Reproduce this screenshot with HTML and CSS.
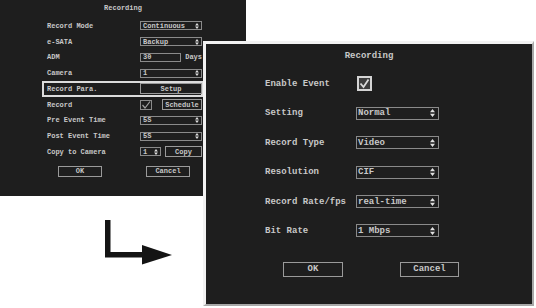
FILE: index.html
```html
<!DOCTYPE html>
<html lang="en">
<head>
    <meta charset="UTF-8">
    <title>Recording</title>
    <link rel="stylesheet" href="styles.css">
</head>
<body>
<div class="desk">

    <div class="win win-main">
        <div class="win-title">Recording</div>
        <div class="rows">
            <div class="row">
                <span class="lbl">Record Mode</span>
                <span class="sel">Continuous<svg class="updown" viewBox="0 0 5 8"><path d="M0 3.3 2.5 0 5 3.3Z M0 4.7 5 4.7 2.5 8Z"/></svg></span>
            </div>
            <div class="row">
                <span class="lbl">e-SATA</span>
                <span class="sel">Backup<svg class="updown" viewBox="0 0 5 8"><path d="M0 3.3 2.5 0 5 3.3Z M0 4.7 5 4.7 2.5 8Z"/></svg></span>
            </div>
            <div class="row">
                <span class="lbl">ADM</span>
                <span class="inp">30</span>
                <span class="unit">Days</span>
            </div>
            <div class="row">
                <span class="lbl">Camera</span>
                <span class="sel">1<svg class="updown" viewBox="0 0 5 8"><path d="M0 3.3 2.5 0 5 3.3Z M0 4.7 5 4.7 2.5 8Z"/></svg></span>
            </div>
            <div class="row row-focus">
                <span class="lbl">Record Para.</span>
                <span class="btn btn-wide">Setup</span>
            </div>
            <div class="row">
                <span class="lbl">Record</span>
                <svg class="check-sm" viewBox="0 0 12 10"><rect x="0.5" y="0.5" width="11" height="9" fill="none" stroke="#8a8a8a"/><path d="M2.5 5 5 8 10 1.5" fill="none" stroke="#a0a0a0" stroke-width="1.2"/></svg>
                <span class="btn btn-sched">Schedule</span>
            </div>
            <div class="row">
                <span class="lbl">Pre Event Time</span>
                <span class="sel">5S<svg class="updown" viewBox="0 0 5 8"><path d="M0 3.3 2.5 0 5 3.3Z M0 4.7 5 4.7 2.5 8Z"/></svg></span>
            </div>
            <div class="row">
                <span class="lbl">Post Event Time</span>
                <span class="sel">5S<svg class="updown" viewBox="0 0 5 8"><path d="M0 3.3 2.5 0 5 3.3Z M0 4.7 5 4.7 2.5 8Z"/></svg></span>
            </div>
            <div class="row">
                <span class="lbl">Copy to Camera</span>
                <span class="sel sel-mini">1<svg class="updown" viewBox="0 0 5 8"><path d="M0 3.3 2.5 0 5 3.3Z M0 4.7 5 4.7 2.5 8Z"/></svg></span>
                <span class="btn btn-copy">Copy</span>
            </div>
        </div>
        <div class="actions">
            <span class="btn btn-act">OK</span>
            <span class="btn btn-act">Cancel</span>
        </div>
    </div>

    <svg class="arrow" viewBox="0 0 80 60">
        <path d="M5 5H10.5V37H43V42.5H5Z" fill="#141414"/>
        <path d="M42 30 72 40 42 49.5Z" fill="#141414"/>
    </svg>

    <div class="win win-event">
        <div class="win-title">Recording</div>
        <div class="rows">
            <div class="row">
                <span class="lbl">Enable Event</span>
                <svg class="check-lg" viewBox="0 0 15 15"><rect x="1" y="1" width="13" height="13" fill="#3c3c3c" stroke="#d4d4d4" stroke-width="2"/><path d="M3.5 7.5 6.5 11 11.5 3.5" fill="none" stroke="#d8d8d8" stroke-width="1.8"/></svg>
            </div>
            <div class="row">
                <span class="lbl">Setting</span>
                <span class="sel">Normal<svg class="updown" viewBox="0 0 5 8"><path d="M0 3.3 2.5 0 5 3.3Z M0 4.7 5 4.7 2.5 8Z"/></svg></span>
            </div>
            <div class="row">
                <span class="lbl">Record Type</span>
                <span class="sel">Video<svg class="updown" viewBox="0 0 5 8"><path d="M0 3.3 2.5 0 5 3.3Z M0 4.7 5 4.7 2.5 8Z"/></svg></span>
            </div>
            <div class="row">
                <span class="lbl">Resolution</span>
                <span class="sel">CIF<svg class="updown" viewBox="0 0 5 8"><path d="M0 3.3 2.5 0 5 3.3Z M0 4.7 5 4.7 2.5 8Z"/></svg></span>
            </div>
            <div class="row">
                <span class="lbl">Record Rate/fps</span>
                <span class="sel">real-time<svg class="updown" viewBox="0 0 5 8"><path d="M0 3.3 2.5 0 5 3.3Z M0 4.7 5 4.7 2.5 8Z"/></svg></span>
            </div>
            <div class="row">
                <span class="lbl">Bit Rate</span>
                <span class="sel">1 Mbps<svg class="updown" viewBox="0 0 5 8"><path d="M0 3.3 2.5 0 5 3.3Z M0 4.7 5 4.7 2.5 8Z"/></svg></span>
            </div>
        </div>
        <div class="actions">
            <span class="btn btn-ok">OK</span>
            <span class="btn btn-cancel">Cancel</span>
        </div>
    </div>

</div>
</body>
</html>
```

FILE: styles.css
```css
body {
    margin: 0;
    background: #fff;
    font-family: "Liberation Mono", "DejaVu Sans Mono", monospace;
    font-weight: bold;
    color: #c8c8c8;
}

.desk {
    position: relative;
    width: 536px;
    height: 308px;
    overflow: hidden;
    background: #fff;
}

/* windows */
.win {
    position: absolute;
    background: #1e1e1e;
}

.win .row {
    display: flex;
    align-items: center;
    box-sizing: border-box;
}

.lbl {
    flex: 1;
    white-space: nowrap;
}

.sel, .inp, .btn {
    box-sizing: border-box;
    display: flex;
    align-items: center;
    white-space: nowrap;
}

.sel {
    justify-content: space-between;
    border: 1px solid #8a8a8a;
}

.btn {
    justify-content: center;
    border: 1px solid #9a9a9a;
}

.updown {
    fill: #e0e0e0;
}

/* first window */
.win-main {
    left: 0;
    top: 0;
    width: 246px;
    height: 196px;
    font-size: 7px;
}

.win-main .win-title {
    height: 17px;
    line-height: 17px;
    text-align: center;
}

.win-main .rows {
    padding-left: 42px;
    margin-top: 1px;
}

.win-main .row {
    width: 161px;
    height: 15.75px;
    padding: 0 1px 0 5px;
}

.win-main .row-focus {
    box-shadow: inset 0 0 0 2px #dcdcdc;
}

.win-main .sel {
    width: 62px;
    height: 9px;
    padding: 0 2px 0 2px;
}

.win-main .updown {
    width: 4px;
    height: 6px;
}

.win-main .sel-mini {
    width: 21px;
}

.inp {
    width: 41px;
    height: 9px;
    padding-left: 2px;
    border: 1px solid #8a8a8a;
}

.unit {
    width: 21px;
    text-align: right;
}

.win-main .btn {
    height: 11px;
}

.btn-wide {
    width: 62px;
}

.check-sm {
    width: 12px;
    height: 10px;
    margin-right: 10px;
}

.btn-sched {
    width: 40px;
}

.btn-copy {
    width: 37px;
    margin-left: 4px;
}

.win-main .actions {
    display: flex;
    gap: 44px;
    padding-left: 58px;
    margin-top: 6px;
}

.btn-act {
    width: 44px;
}

/* second window */
.win-event {
    left: 203px;
    top: 41px;
    width: 326px;
    height: 260px;
    border: 3px solid #f2f2f2;
    border-right: 2px solid #a8a8a8;
    border-bottom: 2px solid #a8a8a8;
    font-size: 9px;
}

.win-event .win-title {
    height: 24px;
    line-height: 24px;
    text-align: center;
}

.win-event .rows {
    padding-left: 59px;
    margin-top: 1.3px;
}

.win-event .row {
    width: 174px;
    height: 29.4px;
}

.win-event .sel {
    width: 83px;
    height: 13px;
    padding: 0 3px 0 1px;
}

.win-event .updown {
    width: 5px;
    height: 8px;
}

.check-lg {
    width: 15px;
    height: 15px;
    margin-right: 67px;
}

.win-event .actions {
    display: flex;
    gap: 57px;
    padding-left: 77px;
    margin-top: 16.3px;
}

.win-event .btn {
    height: 15px;
}

.btn-ok {
    width: 60px;
}

.btn-cancel {
    width: 59px;
}

/* arrow between windows */
.arrow {
    position: absolute;
    left: 100px;
    top: 215px;
    width: 80px;
    height: 60px;
}
```
